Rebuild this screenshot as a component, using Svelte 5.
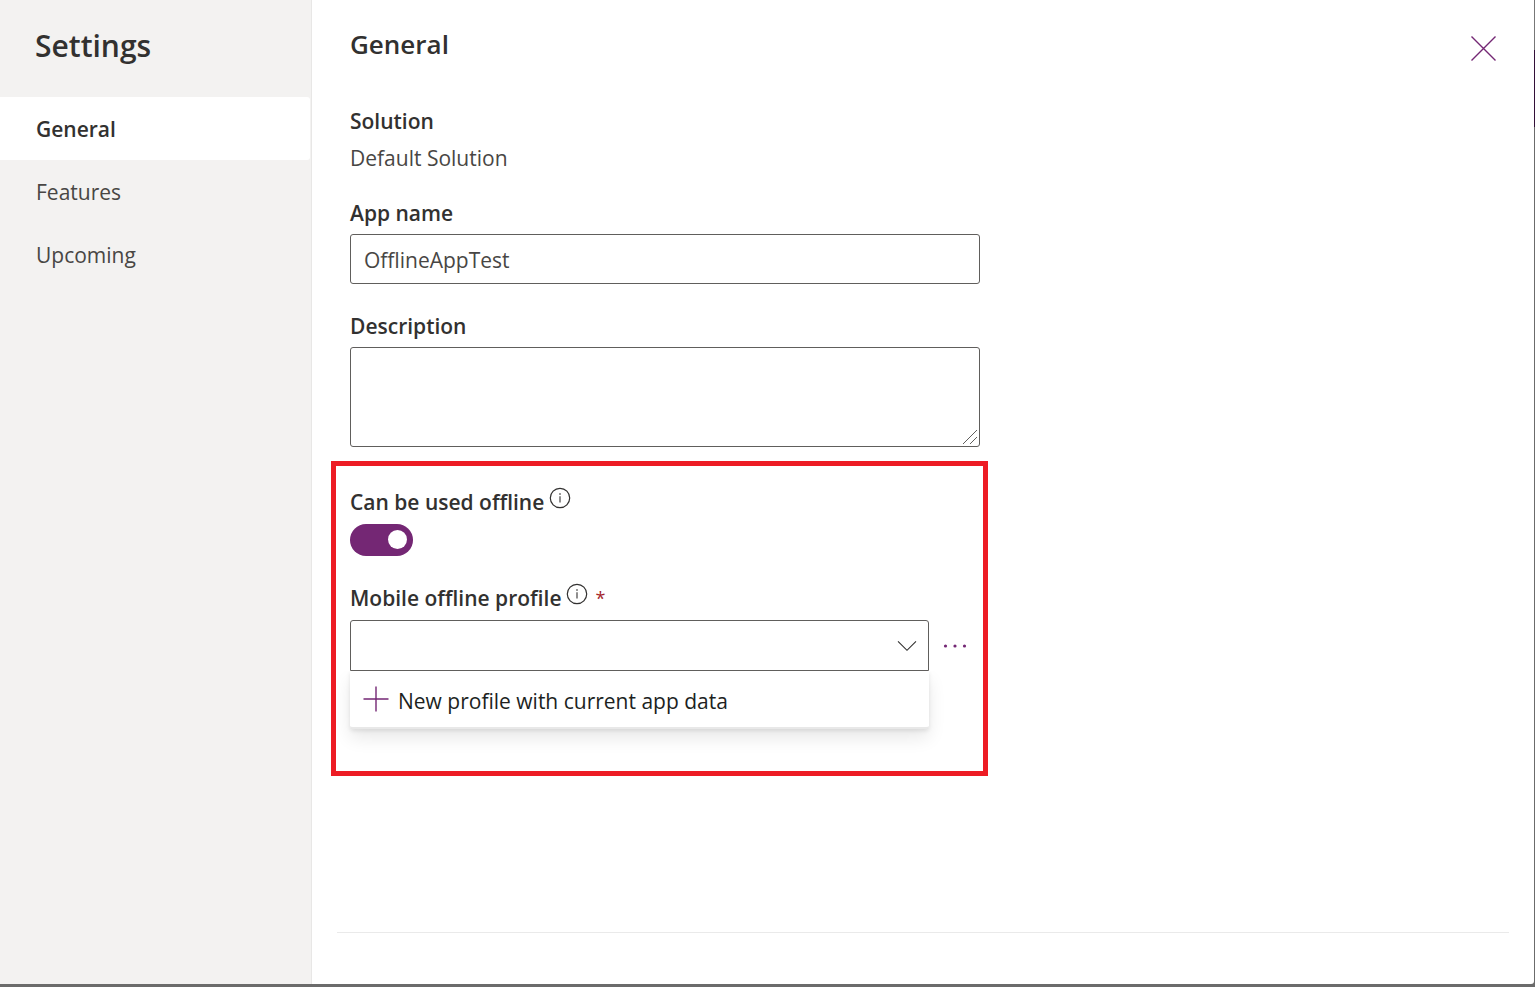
<script>
  const sections = ['General', 'Features', 'Upcoming'];
  let current = $state('General');
  let appName = $state('OfflineAppTest');
  let description = $state('');
  let offline = $state(true);
</script>

{#snippet info(label)}
  <button class="icon info" type="button" aria-label={label}>
    <svg width="22" height="22" viewBox="0 0 22 22" fill="none" stroke="#323130">
      <circle cx="11" cy="11" r="9.7" stroke-width="1.2" />
      <path d="M11 9.2v6.3" stroke-width="1.1" />
      <path d="M11 6.2v1.5" stroke-width="1.3" />
    </svg>
  </button>
{/snippet}

<div class="backdrop">
  <div class="dialog">
    <aside>
      <h1>Settings</h1>
      <nav>
        {#each sections as name}
          <button type="button" class:active={current === name} onclick={() => (current = name)}>{name}</button>
        {/each}
      </nav>
    </aside>

    <main>
      <header>
        <h2>General</h2>
        <button class="icon close" type="button" aria-label="Close">
          <svg width="26" height="26" viewBox="0 0 26 26" fill="none" stroke="#742774" stroke-width="1.4">
            <path d="M1.5 1.5l24 24M25.5 1.5l-24 24" />
          </svg>
        </button>
      </header>

      <form>
        <div class="label">Solution</div>
        <p class="value">Default Solution</p>

        <label class="label" for="app-name">App name</label>
        <input id="app-name" class="control" type="text" bind:value={appName} />

        <label class="label second" for="description">Description</label>
        <div class="area">
          <textarea id="description" class="control" bind:value={description}></textarea>
          <svg class="grip" width="16" height="16" viewBox="0 0 16 16" stroke="#605e5c" fill="none">
            <path d="M1 15L15 1M8 15l7-7" />
          </svg>
        </div>

        <section class="offline">
          <div class="label-row">
            <label class="label" for="offline">Can be used offline</label>
            {@render info('About offline use')}
          </div>
          <input id="offline" class="toggle" type="checkbox" role="switch" bind:checked={offline} />

          <div class="label-row profile">
            <label class="label" for="profile">Mobile offline profile</label>
            {@render info('About offline profiles')}
            <span class="required">*</span>
          </div>
          <div class="picker">
            <div class="combo">
              <select id="profile" class="control"><option></option></select>
              <svg class="chevron" width="20" height="12" viewBox="0 0 20 12" fill="none" stroke="#323130" stroke-width="1.1">
                <path d="M1 1.3l9 9 9-9" />
              </svg>
              <div class="menu">
                <button type="button">
                  <svg width="26" height="26" viewBox="0 0 26 26" fill="none" stroke="#742774" stroke-width="1.4">
                    <path d="M13 .5v25M.5 13h25" />
                  </svg>
                  <span>New profile with current app data</span>
                </button>
              </div>
            </div>
            <button class="icon more" type="button" aria-label="More options">
              <svg width="24" height="4" viewBox="0 0 24 4" fill="#742774">
                <circle cx="2.5" cy="2" r="1.6" /><circle cx="12" cy="2" r="1.6" /><circle cx="21.5" cy="2" r="1.6" />
              </svg>
            </button>
          </div>
        </section>
      </form>

      <footer></footer>
    </main>
  </div>
</div>

<style>
  :global(body) {
    margin: 0;
  }
  .backdrop {
    box-sizing: border-box;
    display: flex;
    min-height: 100vh;
    padding: 0 1px 3px 0;
    background: linear-gradient(#777 50px, #331038 50px, #331038 127px, #6b6b6b 127px);
    color: #323130;
    font: 21px/30px "Open Sans", "Noto Sans", sans-serif;
  }
  .dialog {
    display: flex;
    flex: 1;
    background: #fff;
    border-bottom-right-radius: 3px;
  }
  button,
  input,
  select,
  textarea {
    box-sizing: border-box;
    margin: 0;
    font: inherit;
    color: inherit;
  }
  button {
    border: 0;
    padding: 0;
    background: none;
    cursor: pointer;
  }
  svg {
    display: block;
    flex: none;
  }
  h1,
  h2,
  p {
    margin: 0;
  }
  aside {
    box-sizing: border-box;
    flex: none;
    width: 312px;
    padding-top: 26px;
    border-right: 1px solid #e8e7e6;
    background: #f3f2f1;
  }
  h1 {
    padding-left: 35px;
    font-size: 30px;
    line-height: 40px;
    font-weight: 600;
  }
  nav {
    display: flex;
    flex-direction: column;
    margin: 31px 1px 0 0;
  }
  nav button {
    height: 63px;
    padding-left: 36px;
    border-radius: 0 3px 3px 0;
    color: #484644;
    text-align: left;
  }
  nav .active {
    background: #fff;
    color: #323130;
    font-weight: 600;
  }
  main {
    display: flex;
    flex: 1;
    flex-direction: column;
    padding: 24px 25px 0;
  }
  header {
    display: flex;
    justify-content: space-between;
    padding: 0 13px;
  }
  h2 {
    font-size: 26px;
    line-height: 40px;
    font-weight: 600;
  }
  .close {
    margin-top: 11px;
    height: 26px;
  }
  form {
    box-sizing: border-box;
    width: 100%;
    max-width: 643px;
    padding: 42px 0 0 13px;
  }
  .label {
    display: block;
    font-weight: 600;
  }
  .value {
    margin: 7px 0 25px;
    color: #484644;
  }
  .control {
    display: block;
    width: 100%;
    height: 50px;
    margin-top: 6px;
    padding: 2px 13px 0;
    border: 1px solid #605e5c;
    border-radius: 3px;
    background: #fff;
    outline: none;
    color: #484644;
  }
  .second {
    margin-top: 27px;
  }
  .area,
  .combo {
    position: relative;
  }
  textarea.control {
    height: 100px;
    resize: none;
  }
  .grip {
    position: absolute;
    right: 2px;
    bottom: 2px;
  }
  .offline {
    margin: 14px -8px 0 -19px;
    padding: 21px 14px 42px;
    border: 5px solid #ed1c24;
  }
  .label-row {
    display: flex;
    gap: 5px;
  }
  .info {
    height: 22px;
  }
  .toggle {
    appearance: none;
    display: block;
    width: 63px;
    height: 32px;
    margin-top: 7px;
    padding: 6px;
    border-radius: 16px;
    background: #8a8886;
  }
  .toggle::before {
    content: "";
    display: block;
    width: 19px;
    height: 19px;
    border-radius: 50%;
    background: #fff;
  }
  .toggle:checked {
    background: #742774;
  }
  .toggle:checked::before {
    margin-left: auto;
  }
  .profile {
    margin-top: 27px;
  }
  .required {
    padding-left: 2px;
    color: #a4262c;
    font-size: 18px;
  }
  .picker {
    display: flex;
    align-items: flex-start;
    gap: 14px;
    margin-top: 7px;
    padding-right: 2px;
  }
  .combo {
    flex: 1;
    padding-bottom: 58px;
  }
  select.control {
    appearance: none;
    height: 51px;
    margin-top: 0;
    border-radius: 3px 3px 0 0;
  }
  .chevron {
    position: absolute;
    top: 20px;
    right: 12px;
  }
  .menu {
    position: absolute;
    top: 51px;
    left: 0;
    right: 0;
    background: #fff;
    border-bottom: 2px solid #e8e8e8;
    border-radius: 0 0 3px 3px;
    box-shadow: 0 9px 18px rgba(0, 0, 0, 0.09), 0 2px 4px rgba(0, 0, 0, 0.09);
    clip-path: inset(0 -30px -40px);
    color: #201f1e;
  }
  .menu button {
    display: flex;
    align-items: center;
    gap: 9px;
    width: 100%;
    height: 56px;
    padding-left: 13px;
  }
  .menu span {
    padding-top: 3px;
  }
  .more {
    display: flex;
    align-items: center;
    height: 51px;
  }
  footer {
    height: 51px;
    margin-top: auto;
    border-top: 1px solid #eaeaea;
  }
</style>
